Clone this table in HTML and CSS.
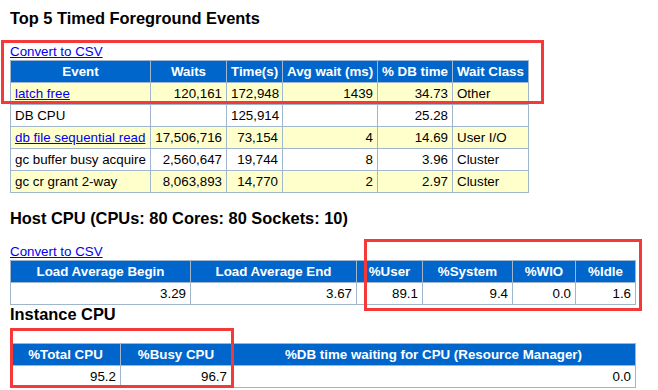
FILE: index.html
```html
<!DOCTYPE html>
<html>
<head>
<meta charset="utf-8">
<link rel="stylesheet" href="styles.css">
</head>
<body>
<div class="page">
  <h3 class="title">Top 5 Timed Foreground Events</h3>
  <div class="csv"><a href="#">Convert to CSV</a></div>
  <table class="awr t-events">
    <colgroup><col class="c1"><col class="c2"><col class="c3"><col class="c4"><col class="c5"><col class="c6"></colgroup>
    <tr><th>Event</th><th>Waits</th><th>Time(s)</th><th>Avg wait (ms)</th><th>% DB time</th><th>Wait Class</th></tr>
    <tr class="hl"><td><a href="#">latch free</a></td><td class="n">120,161</td><td class="n">172,948</td><td class="n">1439</td><td class="n">34.73</td><td>Other</td></tr>
    <tr><td>DB CPU</td><td class="n"></td><td class="n">125,914</td><td class="n"></td><td class="n">25.28</td><td></td></tr>
    <tr class="hl"><td><a href="#">db file sequential read</a></td><td class="n">17,506,716</td><td class="n">73,154</td><td class="n">4</td><td class="n">14.69</td><td>User I/O</td></tr>
    <tr><td>gc buffer busy acquire</td><td class="n">2,560,647</td><td class="n">19,744</td><td class="n">8</td><td class="n">3.96</td><td>Cluster</td></tr>
    <tr class="hl"><td>gc cr grant 2-way</td><td class="n">8,063,893</td><td class="n">14,770</td><td class="n">2</td><td class="n">2.97</td><td>Cluster</td></tr>
  </table>

  <h3 class="title title-gap">Host CPU (CPUs: 80 Cores: 80 Sockets: 10)</h3>
  <div class="csv"><a href="#">Convert to CSV</a></div>
  <table class="awr t-host">
    <colgroup><col class="h1"><col class="h2"><col class="h3"><col class="h4"><col class="h5"><col class="h6"></colgroup>
    <tr><th>Load Average Begin</th><th>Load Average End</th><th>%User</th><th>%System</th><th>%WIO</th><th>%Idle</th></tr>
    <tr><td class="n">3.29</td><td class="n">3.67</td><td class="n">89.1</td><td class="n">9.4</td><td class="n">0.0</td><td class="n">1.6</td></tr>
  </table>

  <h3 class="title title-tight">Instance CPU</h3>
  <table class="awr t-inst">
    <colgroup><col class="i1"><col class="i2"><col class="i3"></colgroup>
    <tr><th>%Total CPU</th><th>%Busy CPU</th><th>%DB time waiting for CPU (Resource Manager)</th></tr>
    <tr><td class="n">95.2</td><td class="n">96.7</td><td class="n">0.0</td></tr>
  </table>

  <div class="mark mark-events"></div>
  <div class="mark mark-host"></div>
  <div class="mark mark-inst"></div>
</div>
</body>
</html>
```
FILE: styles.css
```css
html, body {
  margin: 0;
  padding: 0;
  background: #ffffff;
}
body {
  font-family: "Liberation Sans", Arial, sans-serif;
  color: #000000;
}
.page {
  position: relative;
  padding: 9px 0 0 10px;
}
.title {
  margin: 0 0 16px 0;
  font-size: 16.4px;
  line-height: 19px;
  font-weight: bold;
  color: #000000;
}
.title-gap {
  margin-top: 16px;
}
.title-tight {
  margin-bottom: 19px;
}
.csv {
  font-size: 13.33px;
  line-height: 16px;
  height: 16px;
}
a {
  color: #0000ee;
  text-decoration: underline;
}
.awr {
  border-collapse: collapse;
  table-layout: fixed;
  font-size: 13.33px;
}
.awr th, .awr td {
  border: 1px solid #9fb6cd;
  padding: 3px 4px;
  line-height: 15px;
  height: 15px;
  white-space: nowrap;
  overflow: hidden;
}
.awr th {
  background: #0066cc;
  color: #ffffff;
  font-weight: bold;
  text-align: center;
}
.awr td {
  background: #ffffff;
  text-align: left;
}
.awr tr.hl td {
  background: #ffffcc;
}
.awr td.n {
  text-align: right;
}

.t-events { width: 518px; }
.c1 { width: 140px; }
.c2 { width: 76px; }
.c3 { width: 56px; }
.c4 { width: 95px; }
.c5 { width: 75px; }
.c6 { width: 76px; }

.t-host { width: 625px; }
.h1 { width: 180px; }
.h2 { width: 166px; }
.h3 { width: 66px; }
.h4 { width: 90px; }
.h5 { width: 63px; }
.h6 { width: 60px; }

.t-inst { width: 625px; }
.i1 { width: 110px; }
.i2 { width: 111px; }
.i3 { width: 404px; }

.mark {
  position: absolute;
  box-sizing: border-box;
  border: 3px solid #f53838;
}
.mark-events { left: 1px; top: 40px; width: 543px; height: 64px; }
.mark-host { left: 364px; top: 239px; width: 278px; height: 72px; }
.mark-inst { left: 10px; top: 328px; width: 224px; height: 60px; }
```
